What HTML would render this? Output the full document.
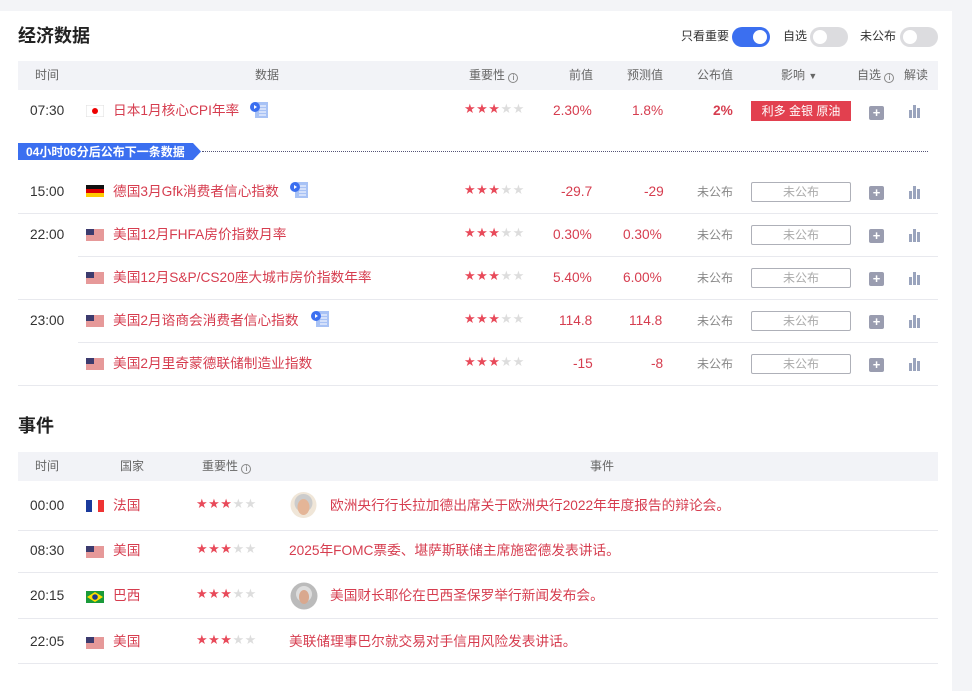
<!DOCTYPE html>
<html><head><meta charset="utf-8">
<style>
*{margin:0;padding:0;box-sizing:border-box}
body{width:972px;height:684px;background:#f3f4f7;font-family:"Liberation Sans","Noto Sans CJK SC",sans-serif;font-size:13.7px;color:#333;position:relative;overflow:hidden}
.panel{position:absolute;left:0;top:11px;width:952px;height:680px;background:#fff}
.a{position:absolute;white-space:nowrap;line-height:16px}
.h1{font-size:18px;font-weight:bold;color:#222;line-height:22px}
.thead{position:absolute;left:18px;width:920px;background:#f2f3f7;height:29px}
.th{position:absolute;font-size:12px;color:#666;line-height:16px;white-space:nowrap}
.line{position:absolute;left:18px;width:920px;height:1px;background:#e8e9ee}
.red{color:#d63d4f}
.gray{color:#888}
.stars{position:absolute;font-size:13px;line-height:16px;color:#e84a5a;font-family:"DejaVu Sans",sans-serif;letter-spacing:0.5px;white-space:nowrap}
.stars i{font-style:normal;color:#ddd}
.box{position:absolute;width:100px;height:20px;border:1px solid #aeb0b8;border-radius:2px;text-align:center;font-size:12px;color:#aaa;line-height:18px}
.plus{position:absolute;width:15px;height:14px;background:#9a9db0;border-radius:2px;color:#fff;font-size:13px;line-height:14px;text-align:center;font-weight:bold}
.bars{position:absolute;width:14px;height:14px}
.flag{position:absolute;width:18px;height:12px}
.doc{position:absolute;width:19px;height:18px}
.tog{position:absolute;width:38px;height:20px;border-radius:10px;background:#dcdcdf}
.tog b{position:absolute;top:3px;width:14px;height:14px;border-radius:50%;background:#fff}
.info{display:inline-block;width:10px;height:10px;border:1px solid #888;border-radius:50%;font-size:8px;line-height:8px;text-align:center;vertical-align:-1px;font-style:normal}
</style></head><body>
<div class="panel"></div>
<div class="a h1" style="left:18px;top:25px">经济数据</div>
<div class="a" style="left:681px;top:28px;font-size:12px">只看重要</div>
<div class="tog" style="left:732px;top:27px;background:#3b6ff0"><b style="left:21px"></b></div>
<div class="a" style="left:783px;top:28px;font-size:12px">自选</div>
<div class="tog" style="left:810px;top:27px"><b style="left:3px"></b></div>
<div class="a" style="left:860px;top:28px;font-size:12px">未公布</div>
<div class="tog" style="left:900px;top:27px"><b style="left:3px"></b></div>

<div class="thead" style="top:61px"></div>
<div class="th" style="left:35px;top:67px">时间</div>
<div class="th" style="left:255px;top:67px">数据</div>
<div class="th" style="left:469px;top:67px">重要性 <i class="info">i</i></div>
<div class="th" style="left:569px;top:67px">前值</div>
<div class="th" style="left:627px;top:67px">预测值</div>
<div class="th" style="left:697px;top:67px">公布值</div>
<div class="th" style="left:781px;top:67px">影响 <span style="font-size:9px">▼</span></div>
<div class="th" style="left:857px;top:67px">自选 <i class="info">i</i></div>
<div class="th" style="left:904px;top:67px">解读</div>

<div class="a" style="left:30px;top:103px">07:30</div>
<svg class="flag" style="left:86px;top:105px" viewBox="0 0 18 12"><rect width="18" height="12" fill="#fff" stroke="#ddd"/><circle cx="9" cy="6" r="3" fill="#e00"/></svg>
<div class="a red" style="left:113px;top:103px">日本1月核心CPI年率</div>
<svg class="doc" style="left:250px;top:101px" viewBox="0 0 19 18"><rect x="5" y="1" width="13" height="16" fill="#a8c2f5"/><path d="M9 5h7M9 8h7M9 11h7M9 14h7" stroke="#fff"/><circle cx="5" cy="6" r="5" fill="#3b6ff0"/><path d="M4 4l3 2-3 2z" fill="#fff"/></svg>
<div class="stars" style="left:464px;top:102px">★★★<i>★★</i></div>
<div class="a red" style="left:553px;top:103px">2.30%</div>
<div class="a red" style="left:632px;top:103px">1.8%</div>
<div class="a red" style="left:713px;top:103px;font-weight:bold">2%</div>
<div class="a" style="left:751px;top:101px;width:100px;height:20px;background:#e2404f;color:#fff;text-align:center;line-height:20px;font-size:12px">利多 金银 原油</div>
<div class="plus" style="left:869px;top:106px">+</div>
<svg class="bars" style="left:908px;top:104px" viewBox="0 0 14 14"><path d="M1 6h3v8H1zM5 1h3v13H5zM9 4h3v10H9z" fill="#9aa4bd"/></svg>

<div class="a" style="left:18px;top:143px;width:183px;height:17px;background:#3b6ff0;clip-path:polygon(0 0,175px 0,183px 50%,175px 100%,0 100%)"></div>
<div class="a" style="left:26px;top:144px;color:#fff;font-size:12px;font-weight:bold">04小时06分后公布下一条数据</div>
<div class="a" style="left:202px;top:151px;width:726px;border-top:1px dotted #557"></div>

<div class="a" style="left:30px;top:184px">15:00</div>
<svg class="flag" style="left:86px;top:185px" viewBox="0 0 18 12"><rect width="18" height="4" fill="#111"/><rect y="4" width="18" height="4" fill="#d00"/><rect y="8" width="18" height="4" fill="#fc0"/></svg>
<div class="a red" style="left:113px;top:184px">德国3月Gfk消费者信心指数</div>
<svg class="doc" style="left:290px;top:181px" viewBox="0 0 19 18"><rect x="5" y="1" width="13" height="16" fill="#a8c2f5"/><path d="M9 5h7M9 8h7M9 11h7M9 14h7" stroke="#fff"/><circle cx="5" cy="6" r="5" fill="#3b6ff0"/><path d="M4 4l3 2-3 2z" fill="#fff"/></svg>
<div class="stars" style="left:464px;top:183px">★★★<i>★★</i></div>
<div class="a red" style="left:561px;top:184px">-29.7</div>
<div class="a red" style="left:644px;top:184px">-29</div>
<div class="a gray" style="left:697px;top:184px;font-size:12px">未公布</div>
<div class="box" style="left:751px;top:182px">未公布</div>
<div class="plus" style="left:869px;top:186px">+</div>
<svg class="bars" style="left:908px;top:185px" viewBox="0 0 14 14"><path d="M1 6h3v8H1zM5 1h3v13H5zM9 4h3v10H9z" fill="#9aa4bd"/></svg>
<div class="line" style="top:213px"></div>

<div class="a" style="left:30px;top:227px">22:00</div>
<svg class="flag" style="left:86px;top:229px" viewBox="0 0 18 12"><rect width="18" height="12" fill="#fff"/><path d="M0 1h18M0 3h18M0 5h18M0 7h18M0 9h18M0 11h18" stroke="#c33" stroke-width="1"/><rect width="8" height="6" fill="#3c3b6e"/></svg>
<div class="a red" style="left:113px;top:227px">美国12月FHFA房价指数月率</div>
<div class="stars" style="left:464px;top:226px">★★★<i>★★</i></div>
<div class="a red" style="left:553px;top:227px">0.30%</div>
<div class="a red" style="left:623px;top:227px">0.30%</div>
<div class="a gray" style="left:697px;top:227px;font-size:12px">未公布</div>
<div class="box" style="left:751px;top:225px">未公布</div>
<div class="plus" style="left:869px;top:229px">+</div>
<svg class="bars" style="left:908px;top:228px" viewBox="0 0 14 14"><path d="M1 6h3v8H1zM5 1h3v13H5zM9 4h3v10H9z" fill="#9aa4bd"/></svg>
<div class="line" style="top:256px;left:78px;width:860px"></div>

<svg class="flag" style="left:86px;top:272px" viewBox="0 0 18 12"><rect width="18" height="12" fill="#fff"/><path d="M0 1h18M0 3h18M0 5h18M0 7h18M0 9h18M0 11h18" stroke="#c33" stroke-width="1"/><rect width="8" height="6" fill="#3c3b6e"/></svg>
<div class="a red" style="left:113px;top:270px">美国12月S&amp;P/CS20座大城市房价指数年率</div>
<div class="stars" style="left:464px;top:269px">★★★<i>★★</i></div>
<div class="a red" style="left:553px;top:270px">5.40%</div>
<div class="a red" style="left:623px;top:270px">6.00%</div>
<div class="a gray" style="left:697px;top:270px;font-size:12px">未公布</div>
<div class="box" style="left:751px;top:268px">未公布</div>
<div class="plus" style="left:869px;top:272px">+</div>
<svg class="bars" style="left:908px;top:271px" viewBox="0 0 14 14"><path d="M1 6h3v8H1zM5 1h3v13H5zM9 4h3v10H9z" fill="#9aa4bd"/></svg>
<div class="line" style="top:299px"></div>

<div class="a" style="left:30px;top:313px">23:00</div>
<svg class="flag" style="left:86px;top:315px" viewBox="0 0 18 12"><rect width="18" height="12" fill="#fff"/><path d="M0 1h18M0 3h18M0 5h18M0 7h18M0 9h18M0 11h18" stroke="#c33" stroke-width="1"/><rect width="8" height="6" fill="#3c3b6e"/></svg>
<div class="a red" style="left:113px;top:313px">美国2月谘商会消费者信心指数</div>
<svg class="doc" style="left:311px;top:310px" viewBox="0 0 19 18"><rect x="5" y="1" width="13" height="16" fill="#a8c2f5"/><path d="M9 5h7M9 8h7M9 11h7M9 14h7" stroke="#fff"/><circle cx="5" cy="6" r="5" fill="#3b6ff0"/><path d="M4 4l3 2-3 2z" fill="#fff"/></svg>
<div class="stars" style="left:464px;top:312px">★★★<i>★★</i></div>
<div class="a red" style="left:559px;top:313px">114.8</div>
<div class="a red" style="left:629px;top:313px">114.8</div>
<div class="a gray" style="left:697px;top:313px;font-size:12px">未公布</div>
<div class="box" style="left:751px;top:311px">未公布</div>
<div class="plus" style="left:869px;top:315px">+</div>
<svg class="bars" style="left:908px;top:314px" viewBox="0 0 14 14"><path d="M1 6h3v8H1zM5 1h3v13H5zM9 4h3v10H9z" fill="#9aa4bd"/></svg>
<div class="line" style="top:342px;left:78px;width:860px"></div>

<svg class="flag" style="left:86px;top:358px" viewBox="0 0 18 12"><rect width="18" height="12" fill="#fff"/><path d="M0 1h18M0 3h18M0 5h18M0 7h18M0 9h18M0 11h18" stroke="#c33" stroke-width="1"/><rect width="8" height="6" fill="#3c3b6e"/></svg>
<div class="a red" style="left:113px;top:356px">美国2月里奇蒙德联储制造业指数</div>
<div class="stars" style="left:464px;top:355px">★★★<i>★★</i></div>
<div class="a red" style="left:573px;top:356px">-15</div>
<div class="a red" style="left:651px;top:356px">-8</div>
<div class="a gray" style="left:697px;top:356px;font-size:12px">未公布</div>
<div class="box" style="left:751px;top:354px">未公布</div>
<div class="plus" style="left:869px;top:358px">+</div>
<svg class="bars" style="left:908px;top:357px" viewBox="0 0 14 14"><path d="M1 6h3v8H1zM5 1h3v13H5zM9 4h3v10H9z" fill="#9aa4bd"/></svg>
<div class="line" style="top:385px"></div>

<div class="a h1" style="left:18px;top:415px">事件</div>
<div class="thead" style="top:452px"></div>
<div class="th" style="left:35px;top:458px">时间</div>
<div class="th" style="left:120px;top:458px">国家</div>
<div class="th" style="left:202px;top:458px">重要性 <i class="info">i</i></div>
<div class="th" style="left:590px;top:458px">事件</div>

<div class="a" style="left:30px;top:498px">00:00</div>
<svg class="flag" style="left:86px;top:500px" viewBox="0 0 18 12"><rect width="6" height="12" fill="#1a3a9c"/><rect x="6" width="6" height="12" fill="#fff"/><rect x="12" width="6" height="12" fill="#e33"/></svg>
<div class="a red" style="left:113px;top:498px">法国</div>
<div class="stars" style="left:196px;top:497px">★★★<i>★★</i></div>
<svg class="a" style="left:290px;top:491px" width="27" height="28" viewBox="0 0 27 28"><circle cx="13.5" cy="14" r="13" fill="#f0e6d8"/><circle cx="13.5" cy="12" r="9" fill="#ccc"/><ellipse cx="13.5" cy="16" rx="6" ry="8" fill="#e4b597"/></svg>
<div class="a red" style="left:330px;top:498px">欧洲央行行长拉加德出席关于欧洲央行2022年年度报告的辩论会。</div>
<div class="line" style="top:530px"></div>

<div class="a" style="left:30px;top:543px">08:30</div>
<svg class="flag" style="left:86px;top:546px" viewBox="0 0 18 12"><rect width="18" height="12" fill="#fff"/><path d="M0 1h18M0 3h18M0 5h18M0 7h18M0 9h18M0 11h18" stroke="#c33" stroke-width="1"/><rect width="8" height="6" fill="#3c3b6e"/></svg>
<div class="a red" style="left:113px;top:543px">美国</div>
<div class="stars" style="left:196px;top:542px">★★★<i>★★</i></div>
<div class="a red" style="left:289px;top:543px">2025年FOMC票委、堪萨斯联储主席施密德发表讲话。</div>
<div class="line" style="top:572px"></div>

<div class="a" style="left:30px;top:588px">20:15</div>
<svg class="flag" style="left:86px;top:591px" viewBox="0 0 18 12"><rect width="18" height="12" fill="#1a9a3a"/><path d="M9 1L17 6L9 11L1 6z" fill="#fd0"/><circle cx="9" cy="6" r="2.8" fill="#1a3a8c"/></svg>
<div class="a red" style="left:113px;top:588px">巴西</div>
<div class="stars" style="left:196px;top:587px">★★★<i>★★</i></div>
<svg class="a" style="left:290px;top:582px" width="28" height="28" viewBox="0 0 28 28"><circle cx="14" cy="14" r="13.5" fill="#bbb"/><circle cx="14" cy="12" r="8" fill="#ddd"/><ellipse cx="14" cy="15" rx="5" ry="7" fill="#d9a88e"/></svg>
<div class="a red" style="left:330px;top:588px">美国财长耶伦在巴西圣保罗举行新闻发布会。</div>
<div class="line" style="top:618px"></div>

<div class="a" style="left:30px;top:634px">22:05</div>
<svg class="flag" style="left:86px;top:637px" viewBox="0 0 18 12"><rect width="18" height="12" fill="#fff"/><path d="M0 1h18M0 3h18M0 5h18M0 7h18M0 9h18M0 11h18" stroke="#c33" stroke-width="1"/><rect width="8" height="6" fill="#3c3b6e"/></svg>
<div class="a red" style="left:113px;top:634px">美国</div>
<div class="stars" style="left:196px;top:633px">★★★<i>★★</i></div>
<div class="a red" style="left:289px;top:634px">美联储理事巴尔就交易对手信用风险发表讲话。</div>
<div class="line" style="top:663px"></div>
</body></html>
